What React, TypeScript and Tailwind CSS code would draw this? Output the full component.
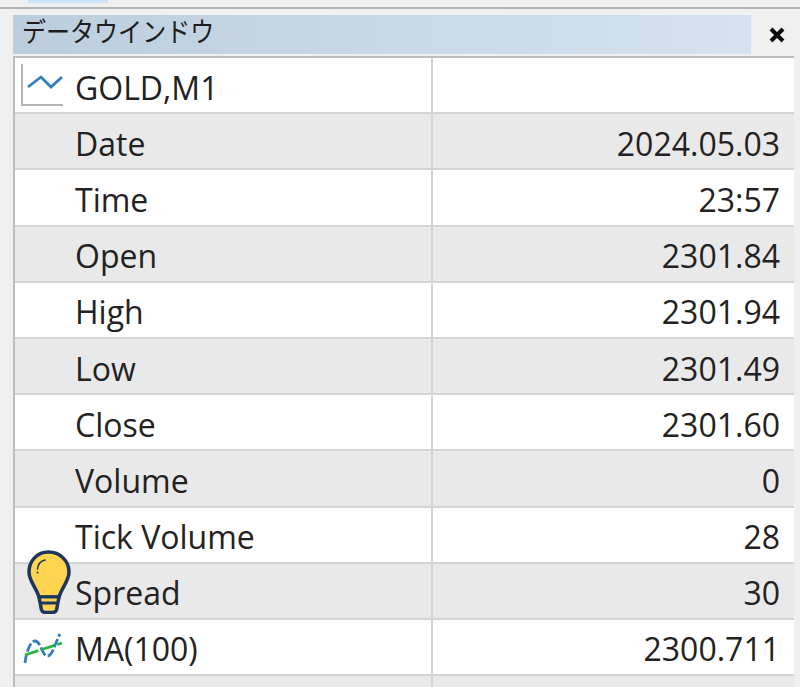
const rows: { label: string; value: string; icon?: "chart" | "ma" }[] = [
  { label: "GOLD,M1", value: "", icon: "chart" },
  { label: "Date", value: "2024.05.03" },
  { label: "Time", value: "23:57" },
  { label: "Open", value: "2301.84" },
  { label: "High", value: "2301.94" },
  { label: "Low", value: "2301.49" },
  { label: "Close", value: "2301.60" },
  { label: "Volume", value: "0" },
  { label: "Tick Volume", value: "28" },
  { label: "Spread", value: "30" },
  { label: "MA(100)", value: "2300.711", icon: "ma" },
  { label: "", value: "" },
];

function ChartIcon() {
  return (
    <svg width="44" height="44" viewBox="0 0 44 44" fill="none">
      <path d="M2 1V42H43" stroke="#b4b4b4" strokeWidth="2" />
      <path d="M8 24L21 14L31 24L42 14" stroke="#2f7fc1" strokeWidth="2.800" />
    </svg>
  );
}

function MaIcon() {
  return (
    <svg width="42" height="38" viewBox="0 0 42 38" fill="none">
      <path d="M3 34C4 24 8 12 13 12C19 12 20 28 26 27C31 26 33 14 38 5" stroke="#2f7fc1" strokeWidth="2.800" strokeDasharray="9 2.500" />
      <path d="M3 26L40 14" stroke="#2fae45" strokeWidth="2.800" strokeDasharray="14 3" />
    </svg>
  );
}

function Bulb() {
  return (
    <svg className="absolute left-[27px] top-[550px]" width="44" height="64" viewBox="0 0 44 64" fill="none">
      <path d="M21.500 2C10 2 2 11 2 22C2 31 9 37 12 47H32C35 37 42 31 42 22C42 11 33 2 21.500 2Z" fill="#ffd54f" stroke="#1d3660" strokeWidth="3.500" />
      <path d="M12 47L14.500 60C15 61.500 17 62.500 19 62.500H25C27 62.500 29 61.500 29.500 60L32 47" fill="#ffd54f" stroke="#1d3660" strokeWidth="3.500" />
      <path d="M12 47H32M13 53H31" stroke="#1d3660" strokeWidth="3" />
      <path d="M10.500 19C11 14 14 11 18 10" stroke="#1d3660" strokeWidth="1.600" strokeLinecap="round" />
      <circle cx="10.500" cy="22.500" r="1" fill="#1d3660" />
    </svg>
  );
}

export default function App() {
  return (
    <div className="relative flex h-[687px] w-[800px] flex-col overflow-hidden bg-[#f0f0f0] font-['Open_Sans','Noto_Sans_CJK_JP',sans-serif] text-[#222222]">
      <div className="h-[9px] shrink-0 border-b-2 border-[#b5b5b5]">
        <div className="ml-[28px] h-[3px] w-[80px] bg-[#cce4f7]" />
      </div>
      <div className="mt-[6px] flex h-[39px] shrink-0 items-center pl-[13px]">
        <div className="flex h-full w-[738px] items-start bg-gradient-to-r from-[#bccddd] to-[#d5e3f0] pl-[9px] pt-[3px] text-[27px] leading-none text-[#1c1c1c]">
          <span className="origin-left scale-x-[0.89]">データウインドウ</span>
        </div>
        <div className="flex flex-1 justify-center pl-[3px]">
          <svg width="18" height="18" viewBox="0 0 18 18">
            <path d="M3 3L15 15M15 3L3 15" stroke="#0a0a0a" strokeWidth="4" />
          </svg>
        </div>
      </div>
      <div className="ml-[13px] mt-[2px] flex w-[781px] flex-1 flex-col border-l-2 border-t-2 border-[#bdbdbd]">
        {rows.map((r, i) => (
          <div
            key={i}
            className={`flex h-[56.2px] shrink-0 border-b-2 border-[#d4d4d4] text-[32px] leading-none ${i % 2 === 1 ? "bg-[#e9e9e9]" : "bg-white"}`}
          >
            <div className="relative flex w-[418px] items-center border-r-2 border-[#d4d4d4] pl-[60px] pt-[5px]">
              {r.icon === "chart" && <span className="absolute left-[5px] top-[5px]"><ChartIcon /></span>}
              {r.icon === "ma" && <span className="absolute left-[7px] top-[9px]"><MaIcon /></span>}
              {r.label}
            </div>
            <div className="flex flex-1 items-center justify-end pr-[14px] pt-[5px]">{r.value}</div>
          </div>
        ))}
      </div>
      <Bulb />
    </div>
  );
}
